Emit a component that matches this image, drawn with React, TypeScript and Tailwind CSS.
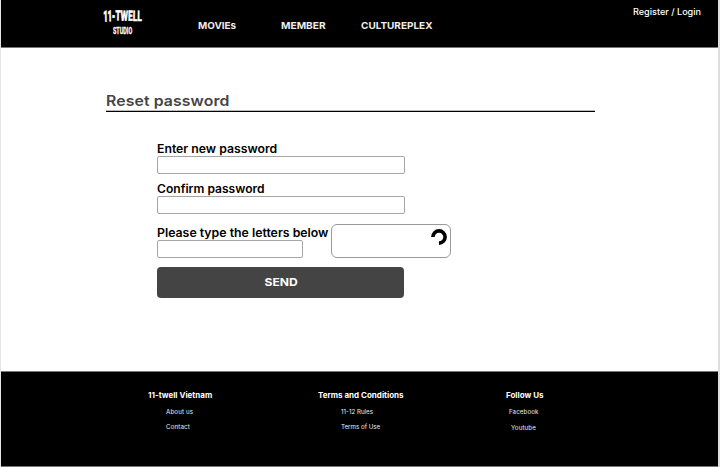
import React from 'react';

function Logo() {
  return (
    <svg className="block h-9 w-11 shrink-0 overflow-visible" viewBox="-2 -6 44 36" fill="white" stroke="white" strokeWidth="0.3">
      <g fontFamily="Roboto, sans-serif" fontWeight="900">
        <text transform="translate(0.4 13.4) rotate(-1) scale(0.66 1.22)" fontSize="12.5" strokeWidth="0.6" textLength="18" lengthAdjust="spacingAndGlyphs">11-</text>
        <text transform="translate(12.2 12.6) rotate(1) scale(0.66 1.2)" fontSize="12" textLength="40.5" lengthAdjust="spacingAndGlyphs">TWELL</text>
        <text transform="translate(10 25.6) scale(0.66 1)" fontSize="8.8" fontWeight="700" textLength="29" lengthAdjust="spacingAndGlyphs">STUDIO</text>
      </g>
    </svg>
  );
}

function Spinner() {
  return (
    <svg className="h-4 w-4" viewBox="0 0 16 16" fill="none">
      <path d="M1.9 8A6.1 6.1 0 1 1 8 14.1" stroke="black" strokeWidth="3.6" />
    </svg>
  );
}

const labelText = "block h-[15px] origin-left whitespace-nowrap text-[11.5px] leading-[17px] font-semibold text-black";

function Field({ label, stretch }: { label: string; stretch: string }) {
  return (
    <label className="block h-10">
      <span className={`${labelText} ${stretch}`}>{label}</span>
      <input type="password" className="block h-[18px] w-[248px] rounded-[2px] border border-[#a5a5a5] bg-white outline-none" />
    </label>
  );
}

export default function App() {
  return (
    <div className="flex h-[467px] w-[720px] flex-col overflow-hidden border-r-2 border-l border-r-[#dedede] border-l-[#e4e4e4] bg-white font-['Inter',sans-serif]">
      <header className="flex h-12 shrink-0 items-start border-b border-[#777] bg-black pl-[100px] text-white">
        <div className="pt-[2px]"><Logo /></div>
        <nav className="flex pt-[18px] text-[9.5px] leading-4 font-bold text-[#eee]">
          <a className="ml-[53px] w-[83px] origin-left scale-x-[1.04]">MOVIEs</a>
          <a className="w-20 origin-left scale-x-[1.07]">MEMBER</a>
          <a className="w-[110px] origin-left scale-x-[1.05]">CULTUREPLEX</a>
        </nav>
        <a className="ml-[162px] origin-left scale-x-[1.01] whitespace-nowrap pt-1 text-[9px] leading-4 font-medium">Register / Login</a>
      </header>

      <main className="h-[323px] shrink-0 pt-[42px] pl-[105px]">
        <h1 className="h-5 w-[489px] origin-left scale-x-[1.09] text-[14.5px] leading-[22px] font-semibold tracking-[0.1px] text-[#444]">Reset password</h1>
        <div className="h-[2px] w-[489px] border-t border-[#bbb] bg-black" />
        <form className="pt-[29px] pl-[51px]">
          <Field label="Enter new password" stretch="scale-x-[1.065]" />
          <Field label="Confirm password" stretch="scale-x-[1.05]" />
          <div className="flex h-[46px]">
            <label className="w-[174px] pt-1">
              <span className={`${labelText} scale-x-[1.07]`}>Please type the letters below</span>
              <input className="block h-[18px] w-[146px] rounded-[2px] border border-[#a5a5a5] bg-white outline-none" />
            </label>
            <div className="mt-[3px] flex h-[34px] w-[120px] justify-end rounded-[6px] border border-[#999] pt-1 pr-[3px]"><Spinner /></div>
          </div>
          <button type="button" className="block h-[31px] w-[247px] rounded-[4px] bg-[#444] text-[11px] leading-[31px] font-bold text-white"><span className="inline-block translate-x-px scale-x-[1.1]">SEND</span></button>
        </form>
      </main>

      <footer className="flex h-24 shrink-0 border-y border-[#777] bg-black pt-4 pl-[147px] text-[6.2px] text-[#eee]">
        <section className="w-[170px]">
          <h2 className="h-4 text-[8px] leading-[14px] font-bold text-white">11-twell Vietnam</h2>
          <a className="block h-[15px] pl-[18px] leading-[15px] tracking-[0.12px]">About us</a>
          <a className="block h-[15px] pl-[18px] leading-[15px] tracking-[0.12px]">Contact</a>
        </section>
        <section className="w-[187px]">
          <h2 className="h-4 text-[8px] leading-[14px] font-bold text-white">Terms and Conditions</h2>
          <a className="block h-[15px] pl-[23px] leading-[15px]">11-12 Rules</a>
          <a className="block h-[15px] pl-[23px] leading-[15px]">Terms of Use</a>
        </section>
        <section>
          <h2 className="h-4 pl-px text-[8px] leading-[14px] font-bold text-white">Follow Us</h2>
          <a className="block h-4 pl-1 leading-[15px] tracking-[0.1px]">Facebook</a>
          <a className="block h-[15px] pl-[6px] leading-[15px] tracking-[0.1px]">Youtube</a>
        </section>
      </footer>
    </div>
  );
}
